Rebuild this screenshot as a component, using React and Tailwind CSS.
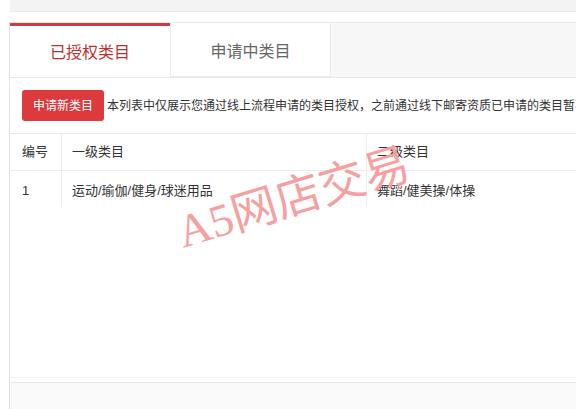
import React from 'react';

const App = () => {
  return (
    <div className="relative w-[576px] h-[409px] overflow-hidden bg-white font-['Liberation_Sans','Noto_Sans_CJK_SC',sans-serif] text-[#333]">
      {/* Top strip */}
      <div className="ml-[10px] h-[12px] bg-[#f3f3f3] border-b border-[#ebebeb]" />

      {/* Panel */}
      <div className="mt-[10px] ml-[9px] w-[900px] h-[387px] flex flex-col border-l border-[#e2e2e2]">
        {/* Tabs */}
        <div className="flex h-[56px] bg-[#f7f7f7] border-t border-b border-[#e8e8e8]">
          <div className="w-[160px] flex items-center justify-center bg-white border-t-[3px] border-[#cf3b40] pt-[2px] text-[16px] text-[#b8322f]">
            已授权类目
          </div>
          <div className="w-[161px] flex items-center justify-center bg-white border-l border-r border-b border-[#ececec] pt-[5px] text-[16px] text-[#666]">
            申请中类目
          </div>
        </div>

        {/* Content */}
        <div className="flex-1 flex flex-col border-b border-[#f1f1f1]">
          <div className="flex items-center mt-[12px] ml-[12px] whitespace-nowrap">
            <button className="h-[31px] px-[11px] rounded-[3px] bg-[#dc3a3c] text-white text-[12px]">
              申请新类目
            </button>
            <span className="ml-[3px] text-[12px] text-[#333]">
              本列表中仅展示您通过线上流程申请的类目授权，之前通过线下邮寄资质已申请的类目暂不在此展示
            </span>
          </div>

          {/* Table */}
          <div className="mt-[12px] text-[13px]">
            <div className="flex h-[37px] border-t border-[#e8e8e8]">
              <div className="w-[52px] pl-[12px] flex items-center border-r border-[#ececec]">编号</div>
              <div className="w-[305px] pl-[10px] flex items-center border-r border-[#ececec]">一级类目</div>
              <div className="flex-1 pl-[10px] flex items-center">二级类目</div>
            </div>
            <div className="flex h-[37px] border-t border-[#ececec]">
              <div className="w-[52px] pl-[12px] pt-[4px] flex items-center border-r border-[#ececec]">1</div>
              <div className="w-[305px] pl-[10px] pt-[4px] flex items-center border-r border-[#ececec]">运动/瑜伽/健身/球迷用品</div>
              <div className="flex-1 pl-[10px] pt-[4px] flex items-center">舞蹈/健美操/体操</div>
            </div>
          </div>
        </div>

        {/* Footer */}
        <div className="mt-[4px] flex-none h-[27px] bg-[#fafafa] border-t border-[#e9e9e9]" />
      </div>

      {/* Watermark */}
      <div className="pointer-events-none absolute left-[183px] top-[210px] origin-[0_38px] -rotate-[17deg] whitespace-nowrap leading-none text-[46px] text-[#f6a1a1] font-['Liberation_Serif','Noto_Sans_CJK_SC',serif]">
        A5网店交易
      </div>
    </div>
  );
};

export default App;
